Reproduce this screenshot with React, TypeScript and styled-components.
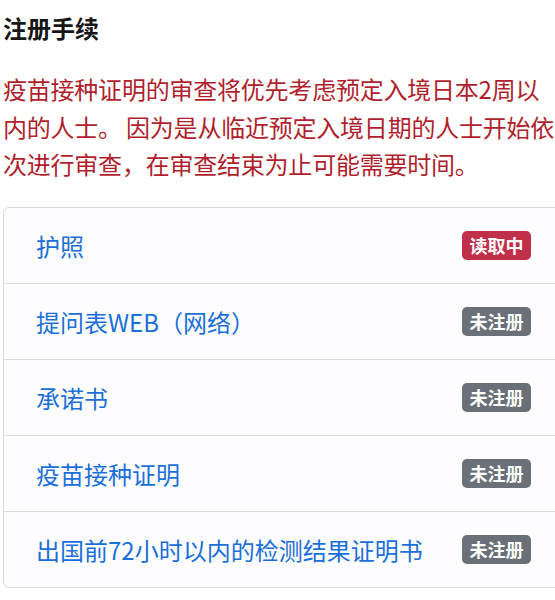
import React from "react";
import styled, { createGlobalStyle } from "styled-components";

const GlobalStyle = createGlobalStyle`
  html, body {
    margin: 0;
    padding: 0;
    background: #ffffff;
    overflow: hidden;
  }
  body {
    font-family: "Noto Sans CJK SC", "Noto Sans", sans-serif;
  }
`;

const Page = styled.main`
  width: 561px;
  padding: 10px 0 0 3px;
`;

const Title = styled.h2`
  margin: 0;
  font-size: 24px;
  line-height: 36px;
  font-weight: 700;
  color: #161616;
`;

const Notice = styled.p`
  width: 557px;
  margin: 24px 0 0;
  font-size: 24px;
  line-height: 37.5px;
  font-weight: 400;
  letter-spacing: -0.22px;
  word-spacing: -1px;
  color: #b01f2d;
`;

const List = styled.ul`
  margin: 24.5px 0 0;
  padding: 0;
  list-style: none;
  border: 1px solid #dcdcdf;
  border-radius: 6px;
  background: #fdfcff;
  overflow: hidden;
`;

const Item = styled.li`
  display: flex;
  align-items: center;
  justify-content: space-between;
  height: 75px;
  padding: 0 32px;
  & + & {
    border-top: 1px solid #dcdcdf;
  }
`;

const ItemLabel = styled.span`
  font-size: 24px;
  line-height: 32px;
  color: #1b6fd9;
`;

const Badge = styled.span<{ $tone: "danger" | "muted" }>`
  display: inline-block;
  height: 29px;
  line-height: 29px;
  padding: 0 7.5px;
  border-radius: 5px;
  font-size: 18px;
  font-weight: 700;
  color: #ffffff;
  background: ${(p) => (p.$tone === "danger" ? "#c1304a" : "#6b6f78")};
`;

type Entry = { label: string; status: string; tone: "danger" | "muted" };

const entries: Entry[] = [
  { label: "护照", status: "读取中", tone: "danger" },
  { label: "提问表WEB（网络）", status: "未注册", tone: "muted" },
  { label: "承诺书", status: "未注册", tone: "muted" },
  { label: "疫苗接种证明", status: "未注册", tone: "muted" },
  { label: "出国前72小时以内的检测结果证明书", status: "未注册", tone: "muted" },
];

export default function App() {
  return (
    <>
      <GlobalStyle />
      <Page>
        <Title>注册手续</Title>
        <Notice>
          疫苗接种证明的审查将优先考虑预定入境日本2周以内的人士。 因为是从临近预定入境日期的人士开始依次进行审查，在审查结束为止可能需要时间。
        </Notice>
        <List>
          {entries.map((e) => (
            <Item key={e.label}>
              <ItemLabel>{e.label}</ItemLabel>
              <Badge $tone={e.tone}>{e.status}</Badge>
            </Item>
          ))}
        </List>
      </Page>
    </>
  );
}
